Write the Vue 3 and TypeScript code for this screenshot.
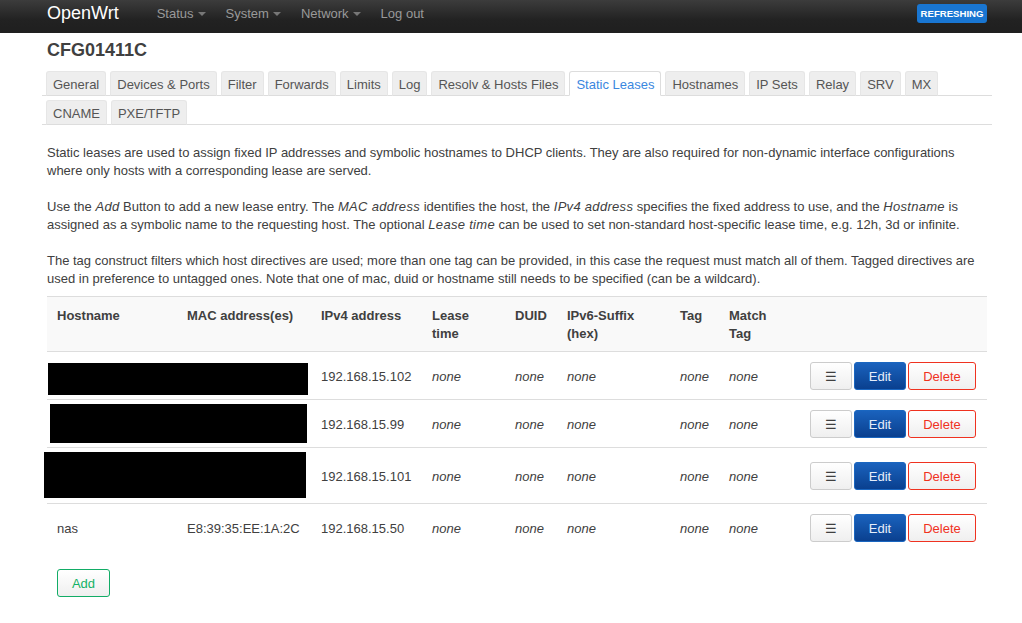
<script setup lang="ts">
interface Lease {
  host?: string
  mac?: string
  ip: string
  mask?: string
  tall?: boolean
}

const menu = ['Status', 'System', 'Network']
const tabRows = [
  ['General', 'Devices & Ports', 'Filter', 'Forwards', 'Limits', 'Log', 'Resolv & Hosts Files', 'Static Leases', 'Hostnames', 'IP Sets', 'Relay', 'SRV', 'MX'],
  ['CNAME', 'PXE/TFTP'],
]
const leases: Lease[] = [
  { ip: '192.168.15.102', mask: 'mask-a' },
  { ip: '192.168.15.99', mask: 'mask-b' },
  { ip: '192.168.15.101', mask: 'mask-c', tall: true },
  { host: 'nas', mac: 'E8:39:35:EE:1A:2C', ip: '192.168.15.50' },
]
</script>

<template>
  <header class="navbar">
    <a class="brand">OpenWrt</a>
    <nav class="nav">
      <a v-for="item in menu" :key="item" class="nav-item">{{ item }}<i class="caret" /></a>
      <a class="nav-item">Log out</a>
    </nav>
    <span class="refreshing">REFRESHING</span>
  </header>

  <main class="page">
    <h2 class="title">CFG01411C</h2>

    <div v-for="(row, i) in tabRows" :key="i" class="tabs">
      <a
        v-for="tab in row"
        :key="tab"
        class="tab"
        :class="{ active: tab === 'Static Leases' }">{{ tab }}</a>
    </div>

    <div class="descr">
      <p>Static leases are used to assign fixed IP addresses and symbolic hostnames to DHCP clients. They are also required for non-dynamic interface configurations where only hosts with a corresponding lease are served.</p>
      <p>Use the <em>Add</em> Button to add a new lease entry. The <em>MAC address</em> identifies the host, the <em>IPv4 address</em> specifies the fixed address to use, and the <em>Hostname</em> is assigned as a symbolic name to the requesting host. The optional <em>Lease time</em> can be used to set non-standard host-specific lease time, e.g. 12h, 3d or infinite.</p>
      <p>The tag construct filters which host directives are used; more than one tag can be provided, in this case the request must match all of them. Tagged directives are used in preference to untagged ones. Note that one of mac, duid or hostname still needs to be specified (can be a wildcard).</p>
    </div>

    <table class="leases">
      <colgroup>
        <col class="c-host" />
        <col class="c-mac" />
        <col class="c-ip" />
        <col class="c-time" />
        <col class="c-duid" />
        <col class="c-suffix" />
        <col class="c-tag" />
        <col class="c-match" />
        <col />
      </colgroup>
      <thead>
        <tr>
          <th>Hostname</th>
          <th>MAC address(es)</th>
          <th>IPv4 address</th>
          <th>Lease<br />time</th>
          <th>DUID</th>
          <th>IPv6-Suffix<br />(hex)</th>
          <th>Tag</th>
          <th>Match<br />Tag</th>
          <th />
        </tr>
      </thead>
      <tbody>
        <tr v-for="lease in leases" :key="lease.ip" :class="{ tall: lease.tall }">
          <td class="host">
            {{ lease.host }}
            <span v-if="lease.mask" class="mask" :class="lease.mask" />
          </td>
          <td>{{ lease.mac }}</td>
          <td>{{ lease.ip }}</td>
          <td><em>none</em></td>
          <td><em>none</em></td>
          <td><em>none</em></td>
          <td><em>none</em></td>
          <td><em>none</em></td>
          <td class="actions">
            <div class="action-row">
              <button class="btn drag">☰</button>
              <button class="btn edit">Edit</button>
              <button class="btn delete">Delete</button>
            </div>
          </td>
        </tr>
      </tbody>
    </table>

    <button class="btn add">Add</button>
  </main>
</template>

<style>
html,
body {
  background: #fff;
}
</style>

<style scoped>
.navbar {
  height: 33px;
  display: flex;
  align-items: center;
  padding: 0 35px 6px 47px;
  box-sizing: border-box;
  background: linear-gradient(#3c3c3c, #222 60%, #1f1f1f);
  font-family: 'Liberation Sans', Arial, sans-serif;
}
.brand {
  font-size: 18px;
  line-height: 24px;
  margin-top: -2px;
  color: #fff;
}
.nav {
  display: flex;
  margin-left: 38px;
  gap: 20px;
  flex: 1;
}
.nav-item {
  font-size: 13px;
  line-height: 26px;
  color: #999;
  display: flex;
  align-items: center;
}
.caret {
  width: 0;
  height: 0;
  margin-left: 4px;
  border-top: 4px solid #777;
  border-left: 4px solid transparent;
  border-right: 4px solid transparent;
}
.refreshing {
  font-size: 9.6px;
  font-weight: bold;
  line-height: 19px;
  padding: 0 3.5px;
  color: #fff;
  background: #1976d2;
  border-radius: 3px;
}
.page {
  padding: 0 30px 0 47px;
  font-family: 'Liberation Sans', Arial, sans-serif;
  font-size: 13px;
  line-height: 18px;
  color: #404040;
}
.title {
  margin: 0;
  padding-top: 7px;
  font-size: 18px;
  line-height: 20px;
  height: 31px;
  color: #404040;
}
.tabs {
  display: flex;
  gap: 4px;
  margin-left: -5px;
  padding-left: 4px;
  height: 25px;
  border-bottom: 1px solid #ddd;
  box-sizing: border-box;
}
.tabs + .tabs {
  margin-top: 4px;
}
.tab {
  height: 25px;
  box-sizing: border-box;
  padding: 0 6px;
  line-height: 25px;
  font-size: 13px;
  white-space: nowrap;
  color: #555;
  background: #eee;
  border: 1px solid #e6e6e6;
  border-bottom-color: #ddd;
  border-radius: 3px 3px 0 0;
}
.tab.active {
  color: #3a87e0;
  background: #fff;
  border-color: #ddd;
  border-bottom-color: #fff;
}
.descr {
  width: 940px;
  padding-top: 19px;
}
.descr p {
  margin: 0 0 18px;
}
.descr p:last-child {
  margin-bottom: 8px;
}
.descr em {
  letter-spacing: 0.3px;
}
.leases {
  width: 940px;
  table-layout: fixed;
  border-collapse: collapse;
  font-size: 13px;
}
.c-host { width: 130px; }
.c-mac { width: 134px; }
.c-ip { width: 111px; }
.c-time { width: 83px; }
.c-duid { width: 52px; }
.c-suffix { width: 113px; }
.c-tag { width: 49px; }
.c-match { width: 71px; }
th {
  padding: 10px 10px 8px;
  text-align: left;
  vertical-align: top;
  font-weight: bold;
  background: #f9f9f9;
  border-top: 1px solid #ddd;
  border-bottom: 1px solid #ddd;
}
td {
  height: 48px;
  padding: 2px 10px 0;
  box-sizing: border-box;
  border-bottom: 1px solid #ddd;
}
td.actions {
  padding: 0 10px;
}
tbody tr:last-child td {
  border-bottom: 0;
}
.tall td {
  height: 56px;
}
.host {
  position: relative;
}
.mask {
  position: absolute;
  background: #000;
}
.mask-a {
  left: 1px;
  top: 11px;
  width: 260px;
  height: 32px;
}
.mask-b {
  left: 3px;
  top: 4px;
  width: 257px;
  height: 39px;
}
.mask-c {
  left: -3px;
  top: 4px;
  width: 262px;
  height: 46px;
}
.action-row {
  display: flex;
  justify-content: flex-end;
  gap: 2px;
  padding-right: 1px;
}
.btn {
  height: 28px;
  box-sizing: border-box;
  padding: 1px 0 0;
  font-family: inherit;
  font-size: 13px;
  border: 1px solid #ccc;
  border-radius: 3px;
  background: linear-gradient(#fff, #efefef);
  color: #404040;
}
.drag {
  width: 42px;
}
.edit {
  width: 52px;
  color: #e6eefa;
  border-color: #1a66c0;
  background: linear-gradient(#1a62bd, #0a408f);
}
.delete {
  width: 68px;
  color: #f0321e;
  border-color: #ef3220;
}
.add {
  display: block;
  width: 53px;
  margin: 17px 0 0 10px;
  color: #12b265;
  border-color: #12ac66;
}
</style>
